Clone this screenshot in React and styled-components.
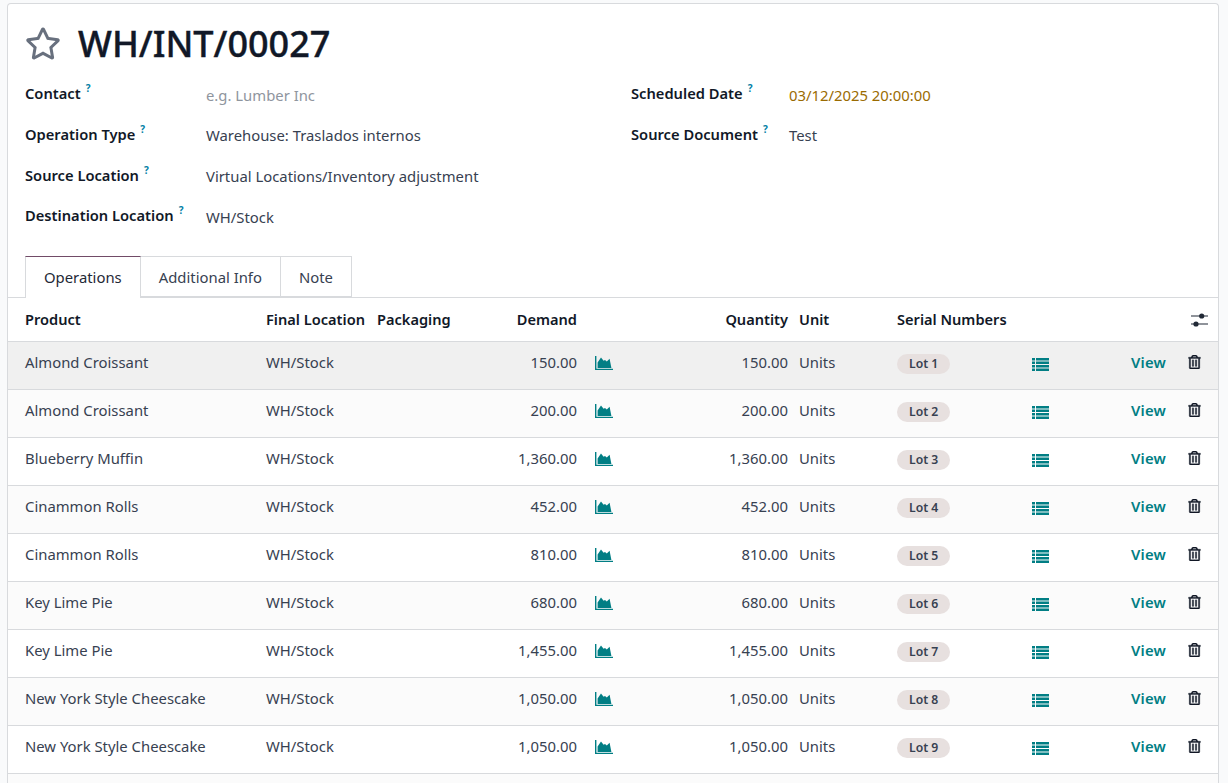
import React from "react";
import styled, { createGlobalStyle } from "styled-components";
import { FaRegStar, FaRegTrashAlt } from "react-icons/fa";

const GlobalStyle = createGlobalStyle`
  html, body {
    margin: 0;
    height: 100%;
    background: #f9fafb;
    overflow: hidden;
  }
  body {
    font-family: "Noto Sans", "Open Sans", sans-serif;
    font-size: 14.85px;
    color: #374151;
  }
`;

const Sheet = styled.div`
  box-sizing: border-box;
  width: 1212px;
  height: 780px;
  margin: 3px 0 0 7px;
  background: #fff;
  border: 1px solid #d8dadd;
  border-bottom: 0;
  border-radius: 4px 4px 0 0;
  overflow: hidden;
`;

const TitleRow = styled.div`
  display: flex;
  align-items: center;
  box-sizing: border-box;
  height: 77px;
  padding: 1px 0 0 17px;
`;

const Star = styled(FaRegStar)`
  width: 36px;
  height: 33px;
  color: #68707e;
  margin-right: 17px;
`;

const Title = styled.h1`
  margin: 0;
  font-size: 36px;
  font-weight: 500;
  -webkit-text-stroke: 0.4px #111827;
  color: #111827;
`;

const Groups = styled.div`
  display: grid;
  grid-template-columns: 606px 1fr;
  box-sizing: border-box;
  padding: 0.4px 0 0 17px;
  height: 175px;
`;

const Group = styled.div`
  display: grid;
  grid-template-columns: ${(p) => p.$label}px 1fr;
  grid-auto-rows: 40.6px;
  align-content: start;
`;

const Label = styled.div`
  display: flex;
  align-items: center;
  font-size: 14.7px;
  font-weight: 600;
  color: #111827;
  white-space: nowrap;
  height: 24px;
  line-height: 24px;
`;

const Help = styled.sup`
  font-size: 10px;
  font-weight: 700;
  color: #0180a5;
  margin-left: 5px;
  line-height: 1;
  align-self: flex-start;
  margin-top: 2px;
`;

const Value = styled.div`
  height: 24px;
  margin-top: -0.6px;
  line-height: 28px;
  white-space: nowrap;
  color: ${(p) => p.$color || "#374151"};
`;

const Tabs = styled.div`
  display: flex;
  height: 41px;
  padding-left: 17px;
  border-bottom: 1px solid #d8dadd;
`;

const Tab = styled.div`
  box-sizing: border-box;
  height: ${(p) => (p.$active ? "42px" : "41px")};
  padding: 0 18px;
  line-height: 41px;
  border: 1px solid #d8dadd;
  border-left-width: ${(p) => (p.$first ? "1px" : "0")};
  border-top-color: ${(p) => (p.$active ? "#714b67" : "#d8dadd")};
  border-bottom: ${(p) => (p.$active ? "0" : "1px solid #d8dadd")};
  background: #fff;
  color: ${(p) => (p.$active ? "#1f2937" : "#374151")};
  position: relative;
  z-index: 1;
`;

const columns = "241px 111px 100px 100px 63px 148px 109px 135px 48px 86px 1fr";

const HeadRow = styled.div`
  display: grid;
  grid-template-columns: ${columns};
  align-items: center;
  box-sizing: border-box;
  height: 44px;
  padding: 0 0 2px 17px;
  font-size: 14.6px;
  font-weight: 600;
  color: #111827;
  white-space: nowrap;
  border-bottom: 1px solid #d8dadd;
`;

const Row = styled.div`
  display: grid;
  grid-template-columns: ${columns};
  align-items: center;
  box-sizing: border-box;
  height: 48px;
  padding: 0 0 7px 17px;
  white-space: nowrap;
  border-bottom: 1px solid #d8dadd;
  background: ${(p) => p.$bg};
`;

const Right = styled.div`
  text-align: right;
`;

const UnitCell = styled.div`
  padding-left: 11px;
`;

const IconTeal = styled.svg`
  display: block;
  fill: #017e84;
  margin-top: ${(p) => p.$top}px;
  margin-left: ${(p) => p.$left}px;
`;

const ChartIcon = () => (
  <IconTeal width="18" height="14" viewBox="0 0 18 14" $top={2} $left={18}>
    <path d="M0 0h1.4v12.8H18V14H0z" />
    <path d="M2.6 12V6.4L6 1.6l2.6 3.2 1.4-.8 1.8 1.6 2.8-2.8L16.4 12z" />
  </IconTeal>
);

const ListIcon = () => (
  <IconTeal width="17" height="13" viewBox="0 0 17 13" $top={4} $left={0}>
    <path d="M0 0h3v2.5H0zM4 0h13v2.5H4zM0 3.5h3V6H0zM4 3.5h13V6H4zM0 7h3v2.5H0zM4 7h13v2.5H4zM0 10.5h3V13H0zM4 10.5h13V13H4z" />
  </IconTeal>
);

const Lot = styled.span`
  display: inline-block;
  height: 20px;
  line-height: 20px;
  margin-top: 3px;
  padding: 0 12px;
  border-radius: 10px;
  background: #e7e0df;
  font-size: 12.2px;
  font-weight: 600;
  color: #374151;
`;

const ViewLink = styled.div`
  text-align: right;
  font-size: 14.8px;
  font-weight: 600;
  letter-spacing: 0.2px;
  color: #017e84;
`;

const Trash = styled(FaRegTrashAlt)`
  width: 13px;
  height: 14px;
  margin: 0 0 0 22px;
  color: #111827;
  stroke: currentColor;
  stroke-width: 12;
  display: block;
`;

const SlidersSvg = styled.svg`
  display: block;
  margin: 2px 0 0 25px;
`;

const Sliders = () => (
  <SlidersSvg width="17" height="14" viewBox="0 0 17 14">
    <path d="M0 3h17M0 11h17" stroke="#212936" strokeWidth="1.1" />
    <circle cx="10.7" cy="3" r="2.6" fill="#212936" />
    <circle cx="5" cy="11" r="2.6" fill="#212936" />
  </SlidersSvg>
);

const Field = ({ label, value, color }) => (
  <>
    <Label>
      {label}
      <Help>?</Help>
    </Label>
    <Value $color={color}>{value}</Value>
  </>
);

const lines = [
  ["Almond Croissant", "150.00", "Lot 1"],
  ["Almond Croissant", "200.00", "Lot 2"],
  ["Blueberry Muffin", "1,360.00", "Lot 3"],
  ["Cinammon Rolls", "452.00", "Lot 4"],
  ["Cinammon Rolls", "810.00", "Lot 5"],
  ["Key Lime Pie", "680.00", "Lot 6"],
  ["Key Lime Pie", "1,455.00", "Lot 7"],
  ["New York Style Cheescake", "1,050.00", "Lot 8"],
  ["New York Style Cheescake", "1,050.00", "Lot 9"],
];

const rowColor = (i) => (i === 0 ? "#f0f0f0" : i % 2 ? "#fbfbfb" : "#fff");

export default function App() {
  return (
    <>
      <GlobalStyle />
      <Sheet>
        <TitleRow>
          <Star />
          <Title>WH/INT/00027</Title>
        </TitleRow>
        <Groups>
          <Group $label={181}>
            <Field label="Contact" value="e.g. Lumber Inc" color="#8f959e" />
            <Field label="Operation Type" value="Warehouse: Traslados internos" />
            <Field label="Source Location" value="Virtual Locations/Inventory adjustment" />
            <Field label="Destination Location" value="WH/Stock" />
          </Group>
          <Group $label={158}>
            <Field label="Scheduled Date" value="03/12/2025 20:00:00" color="#9a6b01" />
            <Field label="Source Document" value="Test" />
          </Group>
        </Groups>
        <Tabs>
          <Tab $active $first>Operations</Tab>
          <Tab>Additional Info</Tab>
          <Tab>Note</Tab>
        </Tabs>
        <HeadRow>
          <div>Product</div>
          <div>Final Location</div>
          <div>Packaging</div>
          <Right>Demand</Right>
          <div />
          <Right>Quantity</Right>
          <UnitCell>Unit</UnitCell>
          <div>Serial Numbers</div>
          <div />
          <div />
          <Sliders />
        </HeadRow>
        {lines.map(([name, qty, lot], i) => (
          <Row key={lot} $bg={rowColor(i)}>
            <div>{name}</div>
            <div>WH/Stock</div>
            <div />
            <Right>{qty}</Right>
            <ChartIcon />
            <Right>{qty}</Right>
            <UnitCell>Units</UnitCell>
            <div>
              <Lot>{lot}</Lot>
            </div>
            <ListIcon />
            <ViewLink>View</ViewLink>
            <Trash />
          </Row>
        ))}
        <Row $bg="#fbfbfb" />
      </Sheet>
    </>
  );
}
